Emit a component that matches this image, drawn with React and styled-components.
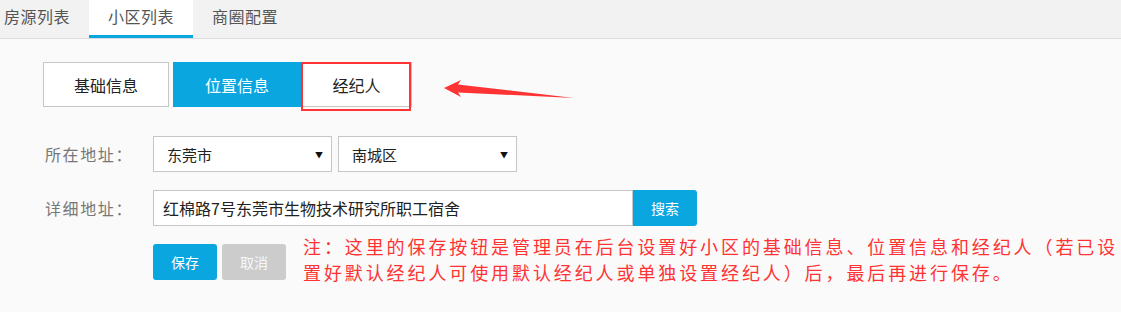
import React from 'react'
import styled, { createGlobalStyle } from 'styled-components'

const Global = createGlobalStyle`
    html, body {
        margin: 0;
        padding: 0;
        background: #fafafa;
        overflow: hidden;
        font-family: "Noto Sans CJK SC", "Noto Sans", sans-serif;
    }
`

const BLUE = '#0aa6e0'

const tabs = ['房源列表', '小区列表', '商圈配置']
const segments = ['基础信息', '位置信息', '经纪人']

const App = () => {
  return (
    <>
      <Global />
      <Page>
        <Nav>
          {tabs.map((t) => (
            <Tab key={t} active={t === '小区列表'}>{t}</Tab>
          ))}
        </Nav>
        <Content>
          <Segments>
            {segments.map((s, i) => (
              <Segment key={s} active={i === 1} wide={i === 2 ? 111 : i === 1 ? 128 : 126}>
                {s}
                {i === 2 && <Highlight />}
              </Segment>
            ))}
            <Arrow width="140" height="30" viewBox="0 0 140 30">
              <polygon points="1,10 18,2 15,6.5 131,20 15,14.5 18,19" fill="#f33" />
            </Arrow>
          </Segments>

          <Form>
            <Row>
              <Label>所在地址：</Label>
              <Select>
                <span>东莞市</span>
                <Caret>▼</Caret>
              </Select>
              <Select>
                <span>南城区</span>
                <Caret>▼</Caret>
              </Select>
            </Row>
            <Row>
              <Label>详细地址：</Label>
              <Input>红棉路7号东莞市生物技术研究所职工宿舍</Input>
              <SearchButton>搜索</SearchButton>
            </Row>
            <ActionRow>
              <Buttons>
                <Button>保存</Button>
                <Button disabledLook>取消</Button>
              </Buttons>
              <Note>
                注：这里的保存按钮是管理员在后台设置好小区的基础信息、位置信息和经纪人（若已设
                <br />
                置好默认经纪人可使用默认经纪人或单独设置经纪人）后，最后再进行保存。
              </Note>
            </ActionRow>
          </Form>
        </Content>
      </Page>
    </>
  )
}

const Page = styled.div`
    width: 1121px;
    height: 312px;
    overflow: hidden;
`

const Nav = styled.div`
    display: flex;
    height: 38px;
    margin-left: -15px;
    background: #f2f2f2;
    border-bottom: 1px solid #dcdcdc;
`

const Tab = styled.div`
    width: 104px;
    height: 38px;
    box-sizing: border-box;
    display: flex;
    align-items: center;
    justify-content: center;
    padding-bottom: 3px;
    font-size: 16px;
    letter-spacing: 0.5px;
    color: #555;
    background: ${(p) => (p.active ? '#fff' : 'transparent')};
    border-bottom: 3px solid ${(p) => (p.active ? BLUE : 'transparent')};
`

const Content = styled.div`
    padding: 23px 0 0 43px;
`

const Segments = styled.div`
    position: relative;
    display: flex;
    height: 45px;
`

const Segment = styled.div`
    position: relative;
    width: ${(p) => p.wide}px;
    margin-right: ${(p) => (p.wide === 126 ? 4 : 0)}px;
    box-sizing: border-box;
    display: flex;
    align-items: center;
    justify-content: center;
    font-size: 16px;
    color: ${(p) => (p.active ? '#fff' : '#222')};
    background: ${(p) => (p.active ? BLUE : '#fff')};
    border: 1px solid ${(p) => (p.active ? BLUE : '#c6c6c6')};
`

const Highlight = styled.div`
    position: absolute;
    left: -1px;
    top: -1px;
    width: 110px;
    height: 49px;
    box-sizing: border-box;
    border: 2px solid #f33;
`

const Arrow = styled.svg`
    position: absolute;
    left: 400px;
    top: 16px;
`

const Form = styled.div`
    display: flex;
    flex-direction: column;
    gap: 18px;
    margin-top: 29px;
    padding-left: 2px;
`

const Row = styled.div`
    display: flex;
    align-items: center;
    gap: 6px;
`

const Label = styled.div`
    width: 102px;
    font-size: 16px;
    letter-spacing: 1.6px;
    color: #777;
`

const Select = styled.div`
    width: 179px;
    height: 36px;
    box-sizing: border-box;
    display: flex;
    align-items: center;
    justify-content: space-between;
    padding: 0 8px 0 13px;
    background: #fff;
    border: 1px solid #c6c6c6;
    font-size: 15px;
    color: #222;
`

const Caret = styled.span`
    font-size: 8px;
    color: #111;
`

const Input = styled.div`
    width: 480px;
    height: 36px;
    box-sizing: border-box;
    display: flex;
    align-items: center;
    padding-left: 9px;
    background: #fff;
    border: 1px solid #c6c6c6;
    font-size: 16px;
    color: #222;
    margin-right: -6px;
`

const SearchButton = styled.div`
    width: 64px;
    height: 36px;
    display: flex;
    align-items: center;
    justify-content: center;
    background: ${BLUE};
    border-radius: 0 3px 3px 0;
    color: #fff;
    font-size: 14px;
`

const ActionRow = styled.div`
    display: flex;
    align-items: flex-start;
    padding-left: 108px;
    margin-top: -11px;
`

const Buttons = styled.div`
    display: flex;
    gap: 5px;
    margin-top: 11px;
`

const Button = styled.div`
    width: 64px;
    height: 36px;
    display: flex;
    align-items: center;
    justify-content: center;
    border-radius: 3px;
    font-size: 14px;
    color: ${(p) => (p.disabledLook ? '#f8f8f8' : '#fff')};
    background: ${(p) => (p.disabledLook ? '#cccccc' : BLUE)};
`

const Note = styled.div`
    width: 840px;
    flex-shrink: 0;
    margin-left: 17px;
    font-size: 18px;
    letter-spacing: 2.9px;
    line-height: 26px;
    white-space: nowrap;
    color: #f33;
`

export default App
